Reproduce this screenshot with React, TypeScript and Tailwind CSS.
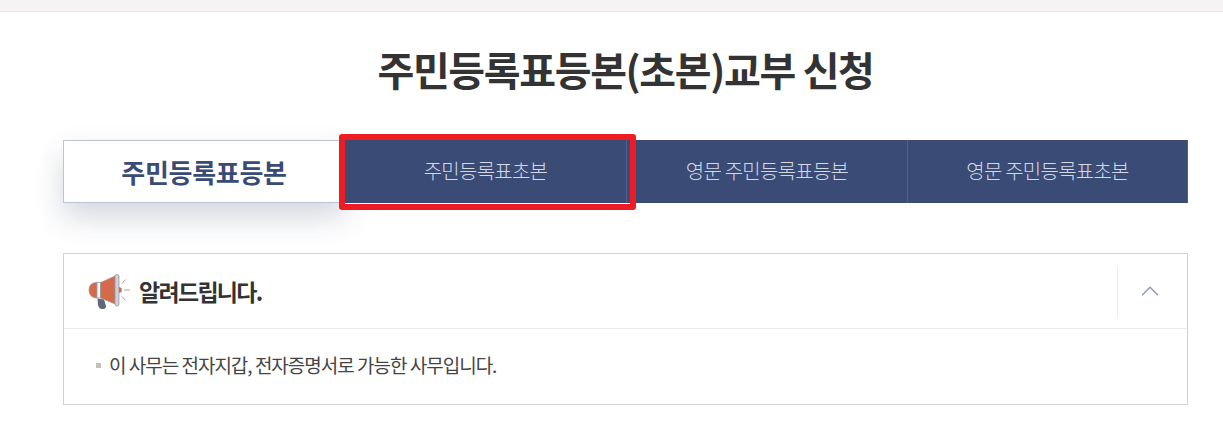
import { ChevronUp } from 'lucide-react';

const FONT = "font-['Noto_Sans_CJK_KR','Liberation_Sans',sans-serif]";

const tabs = [
  { label: '주민등록표초본', width: 'w-[282px]' },
  { label: '영문 주민등록표등본', width: 'w-[281px]' },
  { label: '영문 주민등록표초본', width: 'w-[280px]' },
];

const MegaphoneIcon = () => (
  <svg width="50" height="40" viewBox="0 0 50 40" fill="none" className="mt-[3px]">
    <path d="M4 17 Q4 10 11 9.5 L12 9.5 L12 25 L11 25 Q4 24 4 17 Z" fill="#d5694c" stroke="#9a9ca3" strokeWidth="0.8" />
    <path d="M12 9.5 L15.5 9.5 L15.5 25 L12 25 Z" fill="#f6f4f4" stroke="#8d8f98" strokeWidth="0.7" />
    <path d="M15.5 9.5 L30 3 L30 31 L15.5 25 Z" fill="#d5694c" stroke="#9a9ca3" strokeWidth="0.6" />
    <path d="M30 3 Q30 1.5 32 1.5 Q34 1.5 34 3 L34 31 Q34 33 32 33 Q30 33 30 31 Z" fill="#d3d0d8" stroke="#8d8f98" strokeWidth="0.7" />
    <path d="M34 14 L36.5 15 Q37 17 36.5 19 L34 20 Z" fill="#d5694c" />
    <path d="M12.5 25.5 L19 26.5 L21 33 Q21 36.5 17 36 Q14 36 13 32 Z" fill="#5f6874" />
    <path d="M37 10.5 L40.5 6.5 M39 17 L45 17 M37 23.5 L40.5 27.5" stroke="#a3a5ab" strokeWidth="1" />
  </svg>
);

export default function App() {
  return (
    <div className={`min-h-[431px] bg-white ${FONT} overflow-hidden`}>
      <div className="h-3 bg-[#f5f3f4] border-b border-[#e6e4e5]" />

      <div className="w-[1125px] ml-[63px]">
        <h1 className="mt-[27px] h-[60px] text-center text-[40px] leading-[60px] font-bold tracking-[-1.35px] text-[#333333]">
          주민등록표등본(초본)교부 신청
        </h1>

        <div className="relative mt-[41px] flex h-[63px]">
          <div className="flex w-[282px] items-center justify-center border border-[#b9c3da] bg-white text-[26px] font-bold tracking-[-0.3px] text-[#3a4b75] shadow-[0_14px_30px_rgba(40,50,90,0.2)]">
            주민등록표등본
          </div>
          {tabs.map((tab) => (
            <div
              key={tab.label}
              className={`flex ${tab.width} items-center justify-center border-r border-[#4d5f8a] bg-[#3a4b75] pb-[1px] text-[20px] font-light tracking-[-0.75px] text-[#d3d9e6] last:border-r-0`}
            >
              {tab.label}
            </div>
          ))}
          <div className="absolute left-[276px] top-[-6px] h-[76px] w-[297px] rounded-[3px] border-[6px] border-[#ed1c24]" />
        </div>

        <div className="mt-[50px] h-[152px] border border-[#d2d2d2]">
          <div className="flex h-[75px] items-center justify-between border-b border-[#ececec] pl-[21px]">
            <div className="flex items-center gap-[4px]">
              <MegaphoneIcon />
              <span className="text-[23px] font-bold tracking-[-1.7px] text-[#333333]">알려드립니다.</span>
            </div>
            <div className="mt-[2px] flex h-[50px] w-[70px] items-center justify-center border-l border-[#ececec] pr-[5px]">
              <ChevronUp className="-mt-[2px] h-[30px] w-[30px] text-[#8f9db5]" strokeWidth={1.2} />
            </div>
          </div>
          <div className="flex items-center gap-[8px] pl-[32px] pt-[23px] text-[19px] leading-[26px] tracking-[-1px] text-[#444444]">
            <span className="h-[5px] w-[5px] bg-[#c4c0b8]" />
            이 사무는 전자지갑, 전자증명서로 가능한 사무입니다.
          </div>
        </div>
      </div>
    </div>
  );
}
